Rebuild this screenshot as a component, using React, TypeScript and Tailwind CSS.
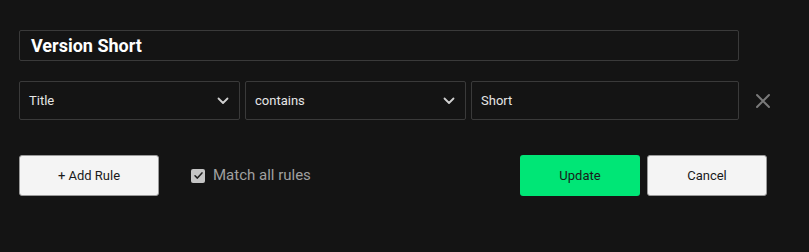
import { useState } from "react";

function Chevron() {
  return (
    <svg viewBox="0 0 12 8" className="h-[8px] w-[12px]" fill="none" aria-hidden="true">
      <path d="M1.5 1.5 L6 6 L10.5 1.5" stroke="#d0d0d0" strokeWidth="1.8" strokeLinecap="round" strokeLinejoin="round" />
    </svg>
  );
}

function Select({ value }: { value: string }) {
  return (
    <div className="flex h-[39px] w-[221px] items-center justify-between rounded-[2px] border border-[#3a3a3a] bg-[#141414] pl-[9px] pr-[10px]">
      <span className="text-[13px] text-[#e6e6e6]">{value}</span>
      <Chevron />
    </div>
  );
}

export default function App() {
  const [all, setAll] = useState(true);
  return (
    <div className="h-[252px] w-[809px] overflow-hidden bg-[#141414] font-['Roboto',sans-serif]">
      <div className="pl-[19px] pt-[30px]">
        <div className="flex h-[31px] w-[720px] items-center rounded-[2px] border border-[#3a3a3a] px-[11px]">
          <span className="text-[18px] font-bold text-white">Version Short</span>
        </div>

        <div className="mt-[20px] flex items-center">
          <Select value="Title" />
          <div className="ml-[5px]">
            <Select value="contains" />
          </div>
          <div className="ml-[5px] flex h-[39px] w-[268px] items-center rounded-[2px] border border-[#3a3a3a] px-[9px]">
            <span className="text-[13px] text-[#e6e6e6]">Short</span>
          </div>
          <button className="ml-[15px] flex h-[20px] w-[18px] items-center justify-center">
            <svg viewBox="0 0 16 16" className="h-[16px] w-[16px]" aria-hidden="true">
              <path d="M2 2 L14 14 M14 2 L2 14" stroke="#7a7a7a" strokeWidth="2" strokeLinecap="round" />
            </svg>
          </button>
        </div>

        <div className="mt-[35px] flex w-[748px] items-center">
          <button className="h-[41px] w-[140px] rounded-[3px] border border-[#9a9a9a] bg-[#f4f4f4] text-[13px] text-[#1a1a1a]">
            + Add Rule
          </button>
          <label className="ml-[32px] flex cursor-pointer items-center gap-[8px]" onClick={() => setAll(!all)}>
            <span className="flex h-[14px] w-[14px] items-center justify-center rounded-[2px] bg-[#c4c4c4]">
              {all && (
                <svg viewBox="0 0 12 12" className="h-[11px] w-[11px]" fill="none" aria-hidden="true">
                  <path d="M2.2 6.3 L4.8 8.8 L9.8 3.2" stroke="#1f1f1f" strokeWidth="1.7" strokeLinecap="round" strokeLinejoin="round" />
                </svg>
              )}
            </span>
            <span className="text-[15px] text-[#a0a0a0]">Match all rules</span>
          </label>
          <div className="ml-auto flex gap-[7px]">
            <button className="h-[41px] w-[120px] rounded-[3px] bg-[#00e676] text-[13px] text-[#1a1a1a]">Update</button>
            <button className="h-[41px] w-[120px] rounded-[3px] border border-[#9a9a9a] bg-[#f4f4f4] text-[13px] text-[#1a1a1a]">
              Cancel
            </button>
          </div>
        </div>
      </div>
    </div>
  );
}
